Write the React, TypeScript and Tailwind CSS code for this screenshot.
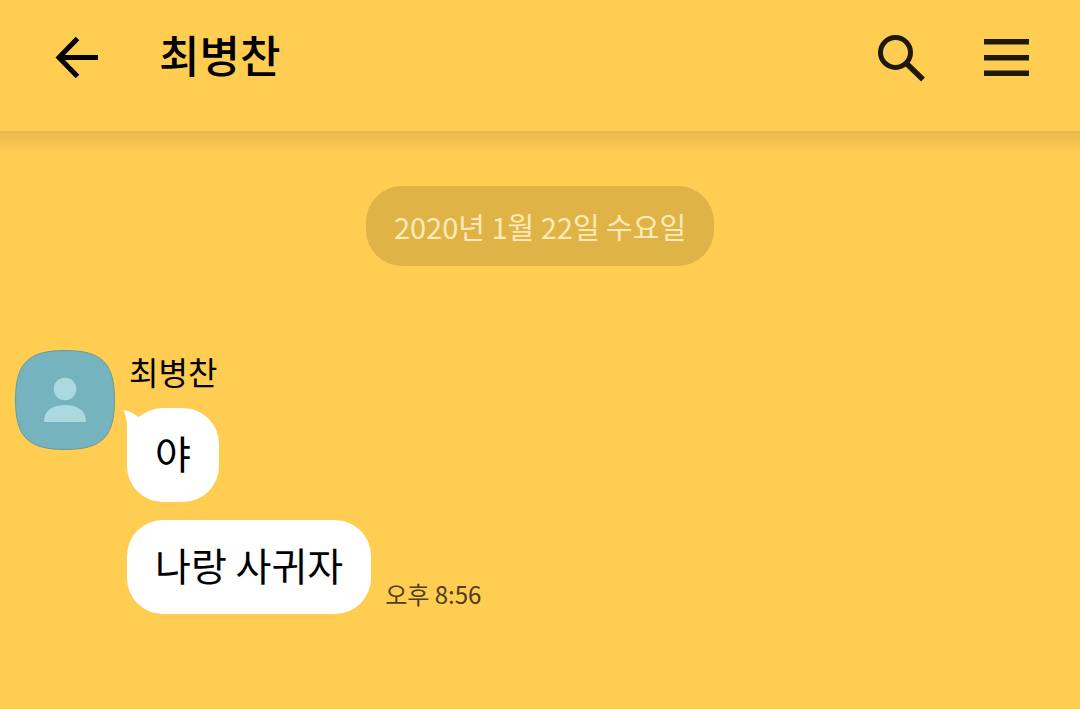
import type { ReactNode } from 'react'

const messages = [
  { id: 1, text: '야' },
  { id: 2, text: '나랑 사귀자', time: '오후 8:56' },
]

function BackIcon() {
  return (
    <svg className="h-11 w-11" viewBox="0 0 44 44" fill="none" stroke="#000" strokeWidth="5" aria-hidden="true">
      <path d="M43 21.5H5M22.5 2.500 4 21.5l18.500 19" />
    </svg>
  )
}

function SearchIcon() {
  return (
    <svg className="h-12 w-12" viewBox="0 0 48 48" fill="none" stroke="#1e190d" strokeWidth="5" aria-hidden="true">
      <circle cx="17.5" cy="18.5" r="15" />
      <path d="M28 29 45 45.5" strokeWidth="5.5" />
    </svg>
  )
}

function MenuIcon() {
  return (
    <svg className="h-12 w-12" viewBox="0 0 48 48" fill="#1e190d" aria-hidden="true">
      <path d="M2 5h45v5.5H2zM2 21h45v5.5H2zM2 36.5h45V42H2z" />
    </svg>
  )
}

function Avatar() {
  return (
    <svg className="h-[100px] w-[100px] shrink-0" viewBox="0 0 100 100" role="img" aria-label="최병찬">
      <path
        d="M50 .5C87 .5 99.5 13 99.5 50S87 99.5 50 99.5.5 87 .5 50 13 .5 50 .5Z"
        fill="#75b3bf"
        stroke="#6c9d94"
        strokeWidth="1"
      />
      <circle cx="50" cy="39" r="11.3" fill="#abd9e0" />
      <path d="M29 72C29 60 38 55 50 55s21 5 21 17Z" fill="#abd9e0" />
    </svg>
  )
}

function Bubble({ tail, children }: { tail?: boolean; children: ReactNode }) {
  return (
    <div className="relative rounded-[36px] bg-white px-7 pt-6 pb-[30px] text-[39px] leading-10 text-black">
      {tail && (
        <svg className="absolute -left-1 top-0.5 h-9 w-6" viewBox="0 0 24 36" fill="#fff" aria-hidden="true">
          <path d="M0 0C7 1 12 4 15 7L24 3V36H4V18C4 10 3 5 0 0Z" />
        </svg>
      )}
      <p className="relative whitespace-nowrap">{children}</p>
    </div>
  )
}

export default function App() {
  return (
    <div className="min-h-screen bg-[#ffcd52] font-['Noto_Sans_CJK_KR',sans-serif]">
      <header className="flex h-[131px] items-start pt-7 pr-[50px] pl-[55px]">
        <button type="button" aria-label="뒤로" className="mt-2">
          <BackIcon />
        </button>
        <h1 className="ml-[60px] flex-1 text-[44px] leading-[52px] font-medium text-black">최병찬</h1>
        <div className="mt-1.5 flex gap-14">
          <button type="button" aria-label="검색">
            <SearchIcon />
          </button>
          <button type="button" aria-label="메뉴">
            <MenuIcon />
          </button>
        </div>
      </header>

      <div className="h-[22px] bg-linear-to-b from-[#e8b94e] to-[#ffcd52]" />

      <main className="pt-[33px] pb-24">
        <div className="flex justify-center">
          <time
            dateTime="2020-01-22"
            className="rounded-[36px] bg-[#e0b347] px-7 py-5 text-[29px] leading-10 text-[#ffeab8]"
          >
            2020년 1월 22일 수요일
          </time>
        </div>

        <section className="mt-[84px] flex gap-3 pl-[15px]">
          <Avatar />
          <div>
            <h2 className="mb-4 pl-0.5 text-[32px] leading-[42px] text-black">최병찬</h2>
            <ul className="flex flex-col gap-[18px]">
              {messages.map((message, i) => (
                <li key={message.id} className="flex items-end gap-3.5">
                  <Bubble tail={i === 0}>{message.text}</Bubble>
                  {message.time && (
                    <time dateTime="20:56" className="text-[24px] leading-10 text-[#4d3d18]">
                      {message.time}
                    </time>
                  )}
                </li>
              ))}
            </ul>
          </div>
        </section>
      </main>
    </div>
  )
}
